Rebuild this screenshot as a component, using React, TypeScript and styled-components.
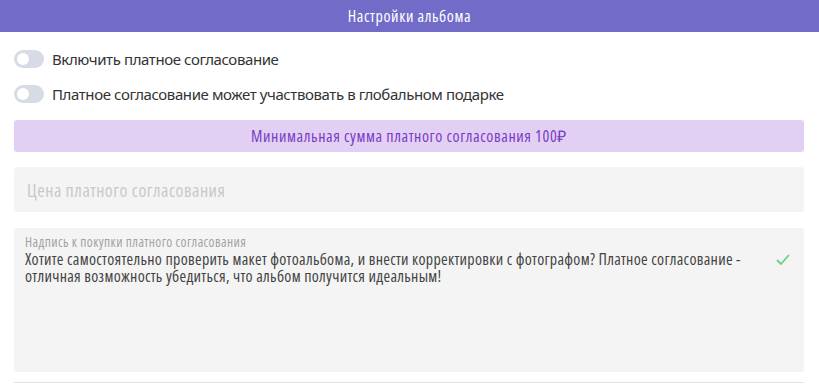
import React from "react";
import styled, { createGlobalStyle } from "styled-components";

const Global = createGlobalStyle`
  html, body { margin: 0; padding: 0; background: #ffffff; }
  body { font-family: "Open Sans", sans-serif; }
`;

const NARROW = `"Open Sans", sans-serif`;

const Page = styled.div`
  width: 819px;
  display: flex;
  flex-direction: column;
`;

const Header = styled.div`
  height: 32px;
  background: #726bc8;
  color: #ffffff;
  display: flex;
  align-items: center;
  justify-content: center;
  font-family: ${NARROW};
  font-stretch: 75%;
  font-size: 16px;
  letter-spacing: 0.6px;
`;

const Body = styled.div`
  padding: 17px 15px 0 14px;
  display: flex;
  flex-direction: column;
`;

const ToggleRow = styled.div`
  display: flex;
  align-items: center;
  gap: 8px;
  height: 19px;
  margin-bottom: 16px;
`;

const Toggle = styled.div`
  width: 30px;
  height: 18px;
  border-radius: 9px;
  background: #d6dbe5;
  position: relative;
  flex: none;
  &::after {
    content: "";
    position: absolute;
    left: 3px;
    top: 3px;
    width: 12px;
    height: 12px;
    border-radius: 50%;
    background: #ffffff;
  }
`;

const ToggleLabel = styled.span`
  font-family: "Noto Sans", sans-serif;
  font-size: 15px;
  color: #333333;
  letter-spacing: -0.4px;
`;

const Banner = styled.div`
  margin-top: 1px;
  height: 32px;
  border-radius: 3px;
  background: #e1d0f4;
  color: #7a3cc4;
  display: flex;
  align-items: center;
  justify-content: center;
  font-family: ${NARROW};
  font-stretch: 75%;
  font-size: 16px;
  letter-spacing: 0.6px;
`;

const PriceInput = styled.div`
  margin-top: 15px;
  height: 45px;
  border-radius: 3px;
  background: #f4f4f4;
  display: flex;
  align-items: center;
  padding-left: 13px;
  font-family: ${NARROW};
  font-stretch: 75%;
  font-size: 18px;
  letter-spacing: 0.5px;
  color: #c9c9c9;
`;

const TextBox = styled.div`
  margin-top: 16px;
  height: 144px;
  border-radius: 3px;
  background: #f4f4f4;
  display: flex;
  align-items: flex-start;
  padding: 6px 12px 0 11px;
  box-sizing: border-box;
  gap: 20px;
`;

const TextCol = styled.div`
  flex: 1;
  display: flex;
  flex-direction: column;
  font-family: ${NARROW};
  font-stretch: 75%;
`;

const SmallLabel = styled.div`
  font-size: 13.5px;
  letter-spacing: 0.4px;
  color: #a3a3a3;
  line-height: 16px;
`;

const Content = styled.div`
  margin-top: 1px;
  font-size: 16px;
  letter-spacing: 0.3px;
  line-height: 17px;
  color: #444444;
`;

const Check = styled.svg`
  flex: none;
  margin-top: 20px;
  margin-right: 2px;
`;

const Divider = styled.div`
  margin-top: 10px;
  height: 1px;
  background: #e3e3e3;
`;

export default function App() {
  return (
    <Page>
      <Global />
      <Header>Настройки альбома</Header>
      <Body>
        <ToggleRow>
          <Toggle />
          <ToggleLabel>Включить платное согласование</ToggleLabel>
        </ToggleRow>
        <ToggleRow>
          <Toggle />
          <ToggleLabel>Платное согласование может участвовать в глобальном подарке</ToggleLabel>
        </ToggleRow>
        <Banner>Минимальная сумма платного согласования 100₽</Banner>
        <PriceInput>Цена платного согласования</PriceInput>
        <TextBox>
          <TextCol>
            <SmallLabel>Надпись к покупки платного согласования</SmallLabel>
            <Content>
              Хотите самостоятельно проверить макет фотоальбома, и внести корректировки с фотографом? Платное согласование -
              отличная возможность убедиться, что альбом получится идеальным!
            </Content>
          </TextCol>
          <Check width="14" height="12" viewBox="0 0 14 12">
            <path d="M1.5 6.5 L5 10 L12.5 1.5" fill="none" stroke="#6fcf8c" strokeWidth="1.8" strokeLinecap="round" strokeLinejoin="round" />
          </Check>
        </TextBox>
        <Divider />
      </Body>
    </Page>
  );
}
